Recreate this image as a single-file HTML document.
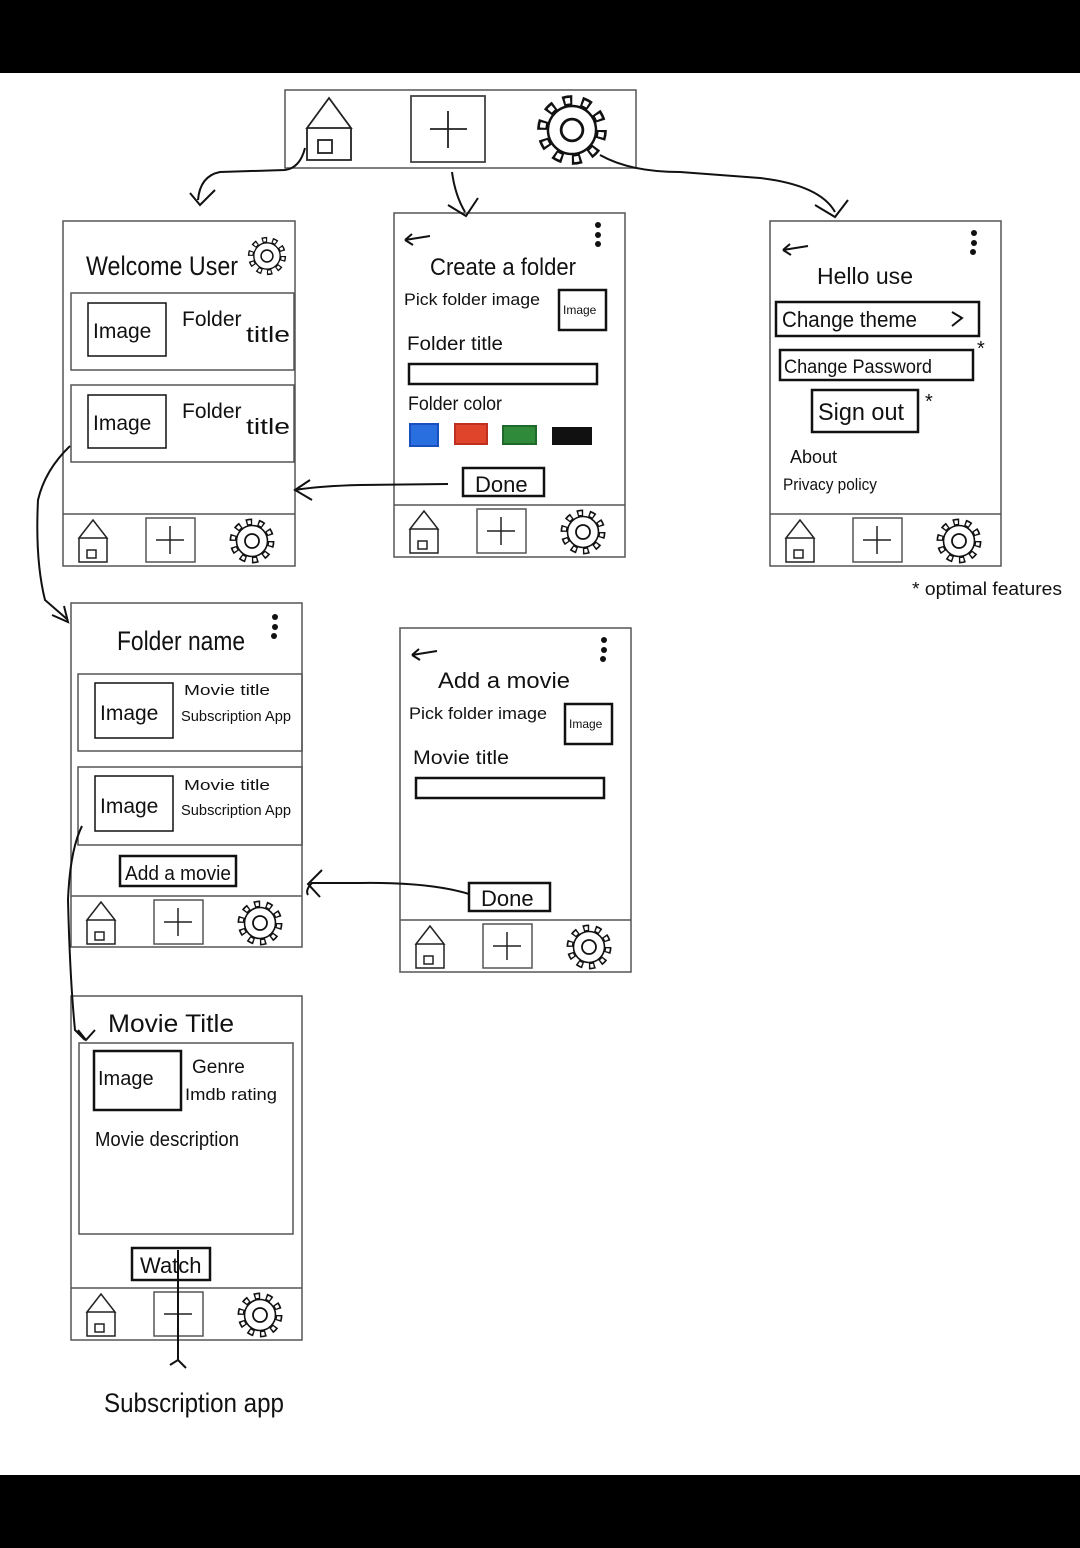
<!DOCTYPE html>
<html><head><meta charset="utf-8"><style>
html,body{margin:0;padding:0;background:#fff}
svg{display:block}
text{font-family:"Liberation Sans",sans-serif;fill:#111}
</style></head><body>
<svg width="1080" height="1548" viewBox="0 0 1080 1548" xmlns="http://www.w3.org/2000/svg">
<defs>
<g id="gear">
<circle r="19" fill="none" stroke="#111" stroke-width="7" stroke-dasharray="6 5.94"/>
<circle r="19" fill="none" stroke="#fff" stroke-width="3.6" stroke-dasharray="3.2 8.74" stroke-dashoffset="-1.4"/>
<circle r="15.5" fill="#fff" stroke="#111" stroke-width="1.6"/>
<circle r="7" fill="none" stroke="#111" stroke-width="1.8"/>
</g>
<g id="nav" fill="none" stroke="#222" stroke-width="1.5">
<path d="M16 24 L30 6 L44 24 Z M16 24 V48 H44 V24"/>
<rect x="24" y="36" width="9" height="8"/>
<rect x="83" y="4" width="49" height="44" stroke="#555"/>
<path d="M107 12 V40 M93 26 H121"/>
<use href="#gear" x="189" y="27"/>
</g>
</defs>
<rect x="0" y="0" width="1080" height="73" fill="#000"/>
<rect x="0" y="1475" width="1080" height="73" fill="#000"/>

<g fill="none" stroke="#555" stroke-width="1.5">
<rect x="285" y="90" width="351" height="78"/>
<rect x="63" y="221" width="232" height="345"/><line x1="63" y1="514" x2="295" y2="514"/>
<rect x="394" y="213" width="231" height="344"/><line x1="394" y1="505" x2="625" y2="505"/>
<rect x="770" y="221" width="231" height="345"/><line x1="770" y1="514" x2="1001" y2="514"/>
<rect x="71" y="603" width="231" height="344"/><line x1="71" y1="896" x2="302" y2="896"/>
<rect x="400" y="628" width="231" height="344"/><line x1="400" y1="920" x2="631" y2="920"/>
<rect x="71" y="996" width="231" height="344"/><line x1="71" y1="1288" x2="302" y2="1288"/>
<rect x="71" y="293" width="223" height="77"/><rect x="71" y="385" width="223" height="77"/>
<rect x="78" y="674" width="224" height="77"/><rect x="78" y="767" width="224" height="78"/>
<rect x="79" y="1043" width="214" height="191"/>
</g>

<g fill="none" stroke="#222" stroke-width="1.8">
<path d="M307 128 L329 98 L351 128 Z M307 128 V160 H351 V128"/>
<rect x="318" y="140" width="14" height="13"/>
<rect x="411" y="96" width="74" height="66" stroke="#444"/>
<path d="M448 111 V148 M430 129 H467"/>
</g>
<use href="#gear" transform="translate(572 130) scale(1.55)"/>

<use href="#nav" x="63" y="514"/>
<use href="#nav" x="394" y="505"/>
<use href="#nav" x="770" y="514"/>
<use href="#nav" x="71" y="896"/>
<use href="#nav" x="400" y="920"/>
<use href="#nav" x="71" y="1288"/>

<g fill="none" stroke="#111" stroke-width="2">
<path d="M305 148 Q300 168 285 170 L220 172 Q200 176 198 200 M190 193 L200 205 L215 190"/>
<path d="M452 172 Q455 195 465 212 M448 205 L466 216 L478 198"/>
<path d="M600 155 Q630 172 680 172 L760 178 Q820 185 835 212 M815 205 L835 217 L848 200"/>
<path d="M448 484 L360 485 Q320 486 295 490 M310 480 L295 490 L312 500"/>
<path d="M70 446 Q45 470 38 500 Q35 560 45 600 L68 620 M52 615 L68 622 L64 606"/>
<path d="M469 894 Q430 882 360 883 L312 883 Q305 890 308 895 M322 870 L308 884 L320 897"/>
<path d="M82 826 Q70 850 68 900 Q70 980 75 1030 L85 1040 M78 1030 L86 1040 L95 1030"/>
<path d="M178 1250 L178 1360 L170 1365 M178 1360 L186 1368"/>
<rect x="88" y="303" width="78" height="53" stroke-width="1.5"/>
<rect x="88" y="395" width="78" height="53" stroke-width="1.5"/>
<rect x="95" y="683" width="78" height="55" stroke-width="1.5"/>
<rect x="95" y="776" width="78" height="55" stroke-width="1.5"/>
<rect x="94" y="1051" width="87" height="59" stroke-width="2.5"/>
<rect x="559" y="290" width="47" height="40" stroke-width="2.5"/>
<rect x="565" y="704" width="47" height="40" stroke-width="2.5"/>
<rect x="409" y="364" width="188" height="20" stroke-width="2.5"/>
<rect x="416" y="778" width="188" height="20" stroke-width="2.5"/>
<rect x="463" y="468" width="81" height="28" stroke-width="2.5"/>
<rect x="469" y="883" width="81" height="28" stroke-width="2.5"/>
<rect x="120" y="856" width="116" height="30" stroke-width="2.5"/>
<rect x="132" y="1248" width="78" height="32" stroke-width="2.5"/>
<rect x="776" y="302" width="203" height="34" stroke-width="2.5"/>
<rect x="780" y="350" width="193" height="30" stroke-width="2.5"/>
<rect x="812" y="390" width="106" height="42" stroke-width="2.5"/>
<path d="M405 240 L430 236 M405 240 L412 234 M405 240 L413 245"/>
<path d="M783 250 L808 246 M783 250 L790 244 M783 250 L791 255"/>
<path d="M412 655 L437 651 M412 655 L419 649 M412 655 L420 660"/>
<path d="M952 312 L962 318 L952 326"/>
</g>
<g fill="#111">
<circle cx="598" cy="225" r="3"/><circle cx="598" cy="235" r="3"/><circle cx="598" cy="244" r="3"/>
<circle cx="974" cy="233" r="3"/><circle cx="974" cy="243" r="3"/><circle cx="973" cy="252" r="3"/>
<circle cx="275" cy="617" r="3"/><circle cx="275" cy="627" r="3"/><circle cx="274" cy="636" r="3"/>
<circle cx="604" cy="640" r="3"/><circle cx="604" cy="650" r="3"/><circle cx="603" cy="659" r="3"/>
</g>
<rect x="410" y="424" width="28" height="22" fill="#2a6fe0" stroke="#1a4fc0" stroke-width="2"/>
<rect x="455" y="424" width="32" height="20" fill="#e0442a" stroke="#c03020" stroke-width="2"/>
<rect x="503" y="426" width="33" height="18" fill="#2f8a3a" stroke="#1f6a2a" stroke-width="2"/>
<rect x="553" y="428" width="38" height="16" fill="#111" stroke="#111" stroke-width="2"/>

<text x="86" y="275" font-size="27" textLength="152" lengthAdjust="spacingAndGlyphs">Welcome User</text>
<use href="#gear" transform="translate(267 256) scale(0.85)"/>
<text x="93" y="338" font-size="21">Image</text><text x="182" y="326" font-size="21">Folder</text><text x="246" y="342" font-size="22" textLength="44" lengthAdjust="spacingAndGlyphs">title</text>
<text x="93" y="430" font-size="21">Image</text><text x="182" y="418" font-size="21">Folder</text><text x="246" y="434" font-size="22" textLength="44" lengthAdjust="spacingAndGlyphs">title</text>
<text x="430" y="275" font-size="24" textLength="146" lengthAdjust="spacingAndGlyphs">Create a folder</text>
<text x="404" y="305" font-size="17" textLength="136" lengthAdjust="spacingAndGlyphs">Pick folder image</text>
<text x="563" y="314" font-size="12">Image</text>
<text x="407" y="350" font-size="19" textLength="96" lengthAdjust="spacingAndGlyphs">Folder title</text>
<text x="408" y="410" font-size="19" textLength="94" lengthAdjust="spacingAndGlyphs">Folder color</text>
<text x="475" y="492" font-size="22">Done</text>
<text x="817" y="284" font-size="23" textLength="96" lengthAdjust="spacingAndGlyphs">Hello use</text>
<text x="782" y="327" font-size="22" textLength="135" lengthAdjust="spacingAndGlyphs">Change theme</text>
<text x="784" y="373" font-size="19" textLength="148" lengthAdjust="spacingAndGlyphs">Change Password</text>
<text x="818" y="420" font-size="24" textLength="86" lengthAdjust="spacingAndGlyphs">Sign out</text>
<text x="977" y="355" font-size="20">*</text><text x="925" y="408" font-size="20">*</text>
<text x="790" y="463" font-size="18">About</text>
<text x="783" y="490" font-size="17" textLength="94" lengthAdjust="spacingAndGlyphs">Privacy policy</text>
<text x="912" y="595" font-size="18" textLength="150" lengthAdjust="spacingAndGlyphs">* optimal features</text>
<text x="117" y="650" font-size="27" textLength="128" lengthAdjust="spacingAndGlyphs">Folder name</text>
<text x="100" y="720" font-size="21">Image</text><text x="184" y="695" font-size="15" textLength="86" lengthAdjust="spacingAndGlyphs">Movie title</text><text x="181" y="721" font-size="15" textLength="110" lengthAdjust="spacingAndGlyphs">Subscription App</text>
<text x="100" y="813" font-size="21">Image</text><text x="184" y="790" font-size="15" textLength="86" lengthAdjust="spacingAndGlyphs">Movie title</text><text x="181" y="815" font-size="15" textLength="110" lengthAdjust="spacingAndGlyphs">Subscription App</text>
<text x="125" y="880" font-size="20" textLength="106" lengthAdjust="spacingAndGlyphs">Add a movie</text>
<text x="438" y="688" font-size="22" textLength="132" lengthAdjust="spacingAndGlyphs">Add a movie</text>
<text x="409" y="719" font-size="17" textLength="138" lengthAdjust="spacingAndGlyphs">Pick folder image</text>
<text x="569" y="728" font-size="12">Image</text>
<text x="413" y="764" font-size="19" textLength="96" lengthAdjust="spacingAndGlyphs">Movie title</text>
<text x="481" y="906" font-size="22">Done</text>
<text x="108" y="1032" font-size="25" textLength="126" lengthAdjust="spacingAndGlyphs">Movie Title</text>
<text x="98" y="1085" font-size="20">Image</text>
<text x="192" y="1073" font-size="19">Genre</text>
<text x="185" y="1100" font-size="17" textLength="92" lengthAdjust="spacingAndGlyphs">Imdb rating</text>
<text x="95" y="1146" font-size="20" textLength="144" lengthAdjust="spacingAndGlyphs">Movie description</text>
<text x="140" y="1273" font-size="22">Watch</text>
<text x="104" y="1412" font-size="27" textLength="180" lengthAdjust="spacingAndGlyphs">Subscription app</text>
</svg>
</body></html>
